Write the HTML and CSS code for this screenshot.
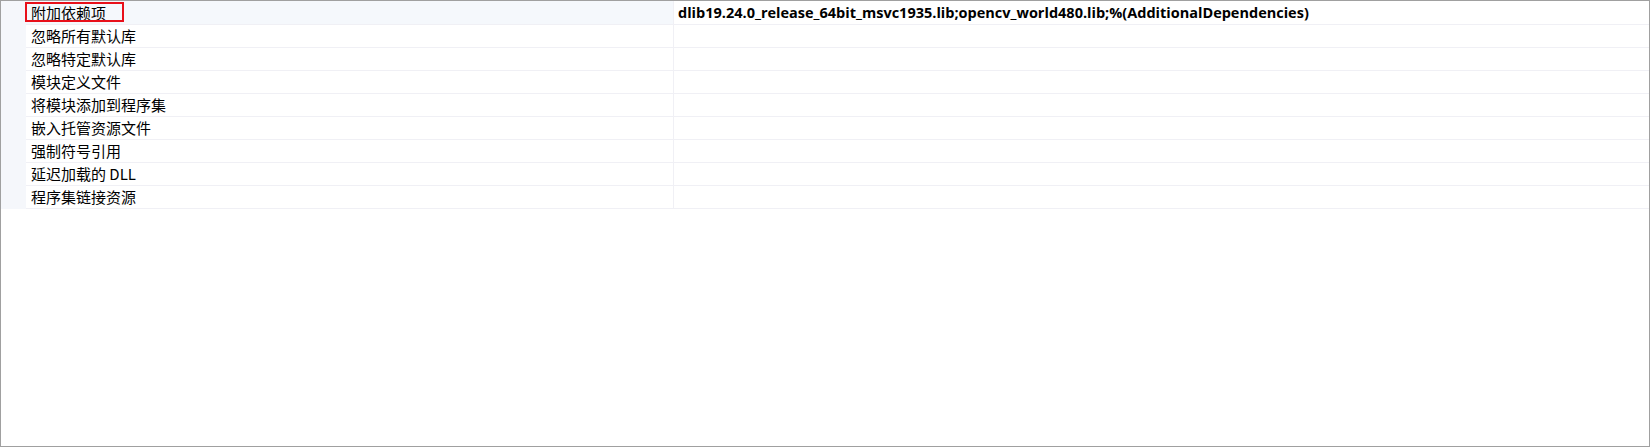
FILE: index.html
```html
<!DOCTYPE html>
<html lang="zh-CN">
<head>
<meta charset="utf-8">
<title>附加依赖项</title>
<link rel="stylesheet" href="styles.css">
</head>
<body>
<div class="frame">
  <div class="grid">
    <div class="row selected">
      <div class="gutter"></div>
      <div class="name"><span class="mark">附加依赖项</span></div>
      <div class="value bold">dlib19.24.0_release_64bit_msvc1935.lib;opencv_world480.lib;%(AdditionalDependencies)</div>
    </div>
    <div class="row"><div class="gutter"></div><div class="name">忽略所有默认库</div><div class="value"></div></div>
    <div class="row"><div class="gutter"></div><div class="name">忽略特定默认库</div><div class="value"></div></div>
    <div class="row"><div class="gutter"></div><div class="name">模块定义文件</div><div class="value"></div></div>
    <div class="row"><div class="gutter"></div><div class="name">将模块添加到程序集</div><div class="value"></div></div>
    <div class="row"><div class="gutter"></div><div class="name">嵌入托管资源文件</div><div class="value"></div></div>
    <div class="row"><div class="gutter"></div><div class="name">强制符号引用</div><div class="value"></div></div>
    <div class="row"><div class="gutter"></div><div class="name">延迟加载的 DLL</div><div class="value"></div></div>
    <div class="row"><div class="gutter"></div><div class="name">程序集链接资源</div><div class="value"></div></div>
  </div>
</div>
</body>
</html>
```

FILE: styles.css
```css
html, body {
  margin: 0;
  padding: 0;
  background: #ffffff;
}
.frame {
  width: 1650px;
  height: 447px;
  box-sizing: border-box;
  border: 1px solid #a0a0a0;
  background: #ffffff;
  font-family: "Microsoft YaHei", "Noto Sans CJK SC", "Noto Sans", sans-serif;
  font-size: 15px;
  color: #000000;
}
.grid {
  display: flex;
  flex-direction: column;
}
.row {
  display: flex;
  height: 23px;
  box-sizing: border-box;
  border-bottom: 1px solid #f0f0f5;
}
.row.selected {
  height: 24px;
}
.gutter {
  width: 25px;
  flex: 0 0 25px;
  background: #f5f7fb;
  margin-bottom: -1px;
}
.name {
  width: 648px;
  flex: 0 0 648px;
  box-sizing: border-box;
  padding-left: 5px;
  border-right: 1px solid #f0f0f5;
  display: flex;
  align-items: center;
  line-height: 22px;
  white-space: nowrap;
}
.row.selected .name {
  background: #f5f8fc;
}
.mark {
  position: relative;
}
.mark::after {
  content: "";
  position: absolute;
  left: -6px;
  top: 0px;
  width: 99px;
  height: 20px;
  border: 2px solid #e8101a;
  box-sizing: border-box;
}
.value {
  flex: 1;
  padding-left: 4px;
  display: flex;
  align-items: center;
  white-space: nowrap;
}
.value.bold {
  font-family: "Open Sans", "Noto Sans", sans-serif;
  font-weight: 700;
  font-size: 14.5px;
}
```
